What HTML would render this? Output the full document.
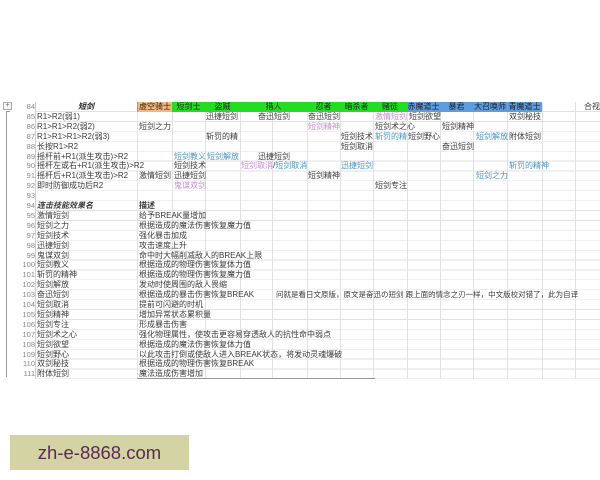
<!DOCTYPE html>
<html><head><meta charset="utf-8"><style>
*{margin:0;padding:0;box-sizing:border-box}
body{width:600px;height:480px;background:#fff;position:relative;overflow:hidden;font-family:"Liberation Sans","Noto Sans CJK SC",sans-serif;font-size:8px;color:#3a3a3a}
.grid{position:absolute;left:35px;top:102px;width:565px;height:277px;background:repeating-linear-gradient(to bottom,transparent 0,transparent 9.2px,#e2e2e2 9.2px,#e2e2e2 9.9px)}
.v{position:absolute;top:102px;height:277px;width:1px;background:#e2e2e2}
.r{position:absolute;left:0;width:600px;height:9.9px;line-height:9.9px}
.c{position:absolute;top:0;white-space:nowrap;height:9.9px}
.n{position:absolute;left:20px;width:15px;text-align:right;color:#888;font-size:7.5px}
.p{color:#c58bd2}.b{color:#4d94bd}
.h{text-align:center;color:#222}
.g{background:#22dd22}.o{background:#f6b77c}.bl{background:#5d9ee0}
</style></head><body>
<div class="grid"></div>
<div class="v" style="left:35px;background:#cfcfcf"></div>
<div class="v" style="left:137px"></div><div class="v" style="left:172px"></div><div class="v" style="left:205px"></div><div class="v" style="left:240px"></div><div class="v" style="left:272px"></div><div class="v" style="left:307px"></div><div class="v" style="left:340px"></div><div class="v" style="left:373px"></div><div class="v" style="left:407px"></div><div class="v" style="left:440px"></div><div class="v" style="left:473px"></div><div class="v" style="left:507px"></div><div class="v" style="left:542px"></div><div class="v" style="left:575px"></div>
<div style="position:absolute;left:137px;top:378px;width:238px;height:1px;background:#999"></div>
<div style="position:absolute;left:3px;top:102px;width:9px;height:8px;border:1px solid #aaa;font-size:7px;line-height:6px;text-align:center;color:#666;background:#f4f4f4">+</div>
<div style="position:absolute;left:6px;top:111px;width:1px;height:266px;background:#999"></div>
<div style="position:absolute;left:6px;top:111px;width:4px;height:1px;background:#999"></div>

<div class="r" style="top:102px"><span class="n">84</span>
<div class="c h" style="left:35px;width:102px;font-weight:bold;font-style:italic">短剑</div>
<div class="c h o" style="left:137px;width:35px;border-left:1px solid #c88">虚空骑士</div>
<div class="c h g" style="left:172px;width:33px">短剑士</div>
<div class="c h g" style="left:205px;width:35px">盗贼</div>
<div class="c h g" style="left:240px;width:67px">猎人</div>
<div class="c h g" style="left:307px;width:33px">忍者</div>
<div class="c h g" style="left:340px;width:33px">暗杀者</div>
<div class="c h g" style="left:373px;width:34px">赌徒</div>
<div class="c h bl" style="left:407px;width:33px">赤魔道士</div>
<div class="c h bl" style="left:440px;width:33px">暴君</div>
<div class="c h bl" style="left:473px;width:34px">大召唤师</div>
<div class="c h bl" style="left:507px;width:35px">青魔道士</div>
<div class="c" style="left:584px">合视</div></div>

<div class="r" style="top:111.9px"><span class="n">85</span><div class="c" style="left:37px">R1&gt;R2(弱1)</div><div class="c" style="left:206px">迅捷短剑</div><div class="c" style="left:258px">奋迅短剑</div><div class="c" style="left:308px">奋迅短剑</div><div class="c p" style="left:375px">激情短剑</div><div class="c" style="left:409px">短剑欲望</div><div class="c" style="left:509px">双剑秘技</div></div>
<div class="r" style="top:121.8px"><span class="n">86</span><div class="c" style="left:37px">R1&gt;R1&gt;R2(弱2)</div><div class="c" style="left:139px">短剑之力</div><div class="c p" style="left:308px">短剑精神</div><div class="c" style="left:375px">短剑术之心</div><div class="c" style="left:442px">短剑精神</div></div>
<div class="r" style="top:131.7px"><span class="n">87</span><div class="c" style="left:37px">R1&gt;R1&gt;R1&gt;R2(弱3)</div><div class="c" style="left:206px">斩罚的精</div><div class="c" style="left:341px">短剑技术</div><div class="c b" style="left:375px">斩罚的精</div><div class="c" style="left:408px">短剑野心</div><div class="c b" style="left:476px">短剑解放</div><div class="c" style="left:509px">附体短剑</div></div>
<div class="r" style="top:141.6px"><span class="n">88</span><div class="c" style="left:37px">长按R1&gt;R2</div><div class="c" style="left:341px">短剑取消</div><div class="c" style="left:442px">奋迅短剑</div></div>
<div class="r" style="top:151.5px"><span class="n">89</span><div class="c" style="left:37px">摇杆前+R1(派生攻击)&gt;R2</div><div class="c b" style="left:174px">短剑教义</div><div class="c b" style="left:207px">短剑解放</div><div class="c" style="left:258px">迅捷短剑</div></div>
<div class="r" style="top:161.4px"><span class="n">90</span><div class="c" style="left:37px">摇杆左或右+R1(派生攻击)&gt;R2</div><div class="c" style="left:174px">短剑技术</div><div class="c" style="left:241px"><span class="p">短剑取消</span>/<span class="b">短剑取消</span></div><div class="c b" style="left:341px">迅捷短剑</div><div class="c b" style="left:509px">斩罚的精神</div></div>
<div class="r" style="top:171.3px"><span class="n">91</span><div class="c" style="left:37px">摇杆后+R1(派生攻击)&gt;R2</div><div class="c" style="left:139px">激情短剑</div><div class="c" style="left:174px">迅捷短剑</div><div class="c" style="left:308px">短剑精神</div><div class="c b" style="left:476px">短剑之力</div></div>
<div class="r" style="top:181.2px"><span class="n">92</span><div class="c" style="left:37px">即时防御成功后R2</div><div class="c p" style="left:174px">鬼谋双剑</div><div class="c" style="left:375px">短剑专注</div></div>
<div class="r" style="top:191.1px"><span class="n">93</span></div>
<div class="r" style="top:201px"><span class="n">94</span><div class="c" style="left:37px;font-weight:bold;font-style:italic">连击技能效果名</div><div class="c" style="left:139px;font-weight:bold">描述</div></div>
<div class="r" style="top:210.9px"><span class="n">95</span><div class="c" style="left:37px">激情短剑</div><div class="c" style="left:139px">给予BREAK量增加</div></div>
<div class="r" style="top:220.8px"><span class="n">96</span><div class="c" style="left:37px">短剑之力</div><div class="c" style="left:139px">根据造成的魔法伤害恢复魔力值</div></div>
<div class="r" style="top:230.7px"><span class="n">97</span><div class="c" style="left:37px">短剑技术</div><div class="c" style="left:139px">强化暴击加成</div></div>
<div class="r" style="top:240.6px"><span class="n">98</span><div class="c" style="left:37px">迅捷短剑</div><div class="c" style="left:139px">攻击速度上升</div></div>
<div class="r" style="top:250.5px"><span class="n">99</span><div class="c" style="left:37px">鬼谋双剑</div><div class="c" style="left:139px">命中时大幅削减敌人的BREAK上限</div></div>
<div class="r" style="top:260.4px"><span class="n">100</span><div class="c" style="left:37px">短剑教义</div><div class="c" style="left:139px">根据造成的物理伤害恢复体力值</div></div>
<div class="r" style="top:270.3px"><span class="n">101</span><div class="c" style="left:37px">斩罚的精神</div><div class="c" style="left:139px">根据造成的物理伤害恢复魔力值</div></div>
<div class="r" style="top:280.2px"><span class="n">102</span><div class="c" style="left:37px">短剑解放</div><div class="c" style="left:139px">发动时使周围的敌人畏缩</div></div>
<div class="r" style="top:290.1px"><span class="n">103</span><div class="c" style="left:37px">奋迅短剑</div><div class="c" style="left:139px">根据造成的暴击伤害恢复BREAK</div><div class="c" style="left:276px;font-size:7.5px">问就是看日文原版，原文是奋迅の短剑 跟上面的情念之刃一样，中文版校对错了，此为自译</div></div>
<div class="r" style="top:300px"><span class="n">104</span><div class="c" style="left:37px">短剑取消</div><div class="c" style="left:139px">提前可闪避的时机</div></div>
<div class="r" style="top:309.9px"><span class="n">105</span><div class="c" style="left:37px">短剑精神</div><div class="c" style="left:139px">增加异常状态累积量</div></div>
<div class="r" style="top:319.8px"><span class="n">106</span><div class="c" style="left:37px">短剑专注</div><div class="c" style="left:139px">形成暴击伤害</div></div>
<div class="r" style="top:329.7px"><span class="n">107</span><div class="c" style="left:37px">短剑术之心</div><div class="c" style="left:139px">强化物理属性，使攻击更容易穿透敌人的抗性命中弱点</div></div>
<div class="r" style="top:339.6px"><span class="n">108</span><div class="c" style="left:37px">短剑欲望</div><div class="c" style="left:139px">根据造成的魔法伤害恢复体力值</div></div>
<div class="r" style="top:349.5px"><span class="n">109</span><div class="c" style="left:37px">短剑野心</div><div class="c" style="left:139px">以此攻击打倒或使敌人进入BREAK状态，将发动灵魂爆破</div></div>
<div class="r" style="top:359.4px"><span class="n">110</span><div class="c" style="left:37px">双剑秘技</div><div class="c" style="left:139px">根据造成的物理伤害恢复BREAK</div></div>
<div class="r" style="top:369.3px"><span class="n">111</span><div class="c" style="left:37px">附体短剑</div><div class="c" style="left:139px">魔法造成伤害增加</div></div>

<div style="position:absolute;left:10px;top:435px;width:179px;height:35px;background:#d4d3a4;color:#5a2a55;font-size:18.5px;line-height:35px;text-align:center">zh-e-8868.com</div>
</body></html>
